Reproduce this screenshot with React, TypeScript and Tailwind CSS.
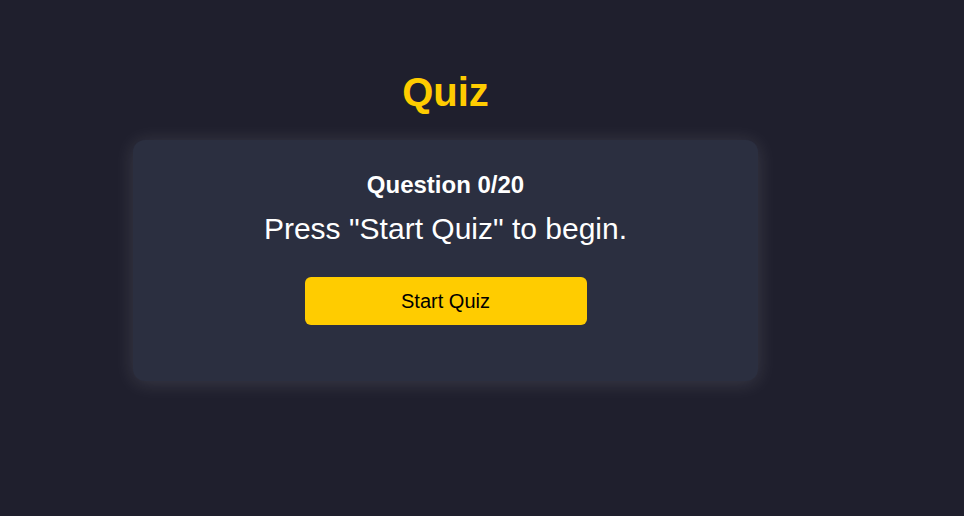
export default function App() {
  return (
    <div className="min-h-[516px] w-full bg-[#1f1f2d]" style={{ fontFamily: '"Liberation Sans", Arial, sans-serif' }}>
      <div className="w-[891px] flex flex-col items-center pt-[69px]">
        <h1 className="text-[40px] leading-[46px] font-bold text-[#ffcc00]">Quiz</h1>
        <div className="mt-[25px] w-[625px] h-[241px] rounded-[12px] bg-[#2b2f40] shadow-[0_2px_20px_rgba(255,255,255,0.13)] flex flex-col items-center pt-[31px]">
          <div className="text-[24px] leading-[28px] font-bold text-white">Question 0/20</div>
          <div className="mt-[13px] text-[30px] leading-[34px] text-white">Press "Start Quiz" to begin.</div>
          <button className="mt-[31px] w-[282px] h-[48px] rounded-[6px] bg-[#ffcc00] text-[20px] text-black">Start Quiz</button>
        </div>
      </div>
    </div>
  );
}
